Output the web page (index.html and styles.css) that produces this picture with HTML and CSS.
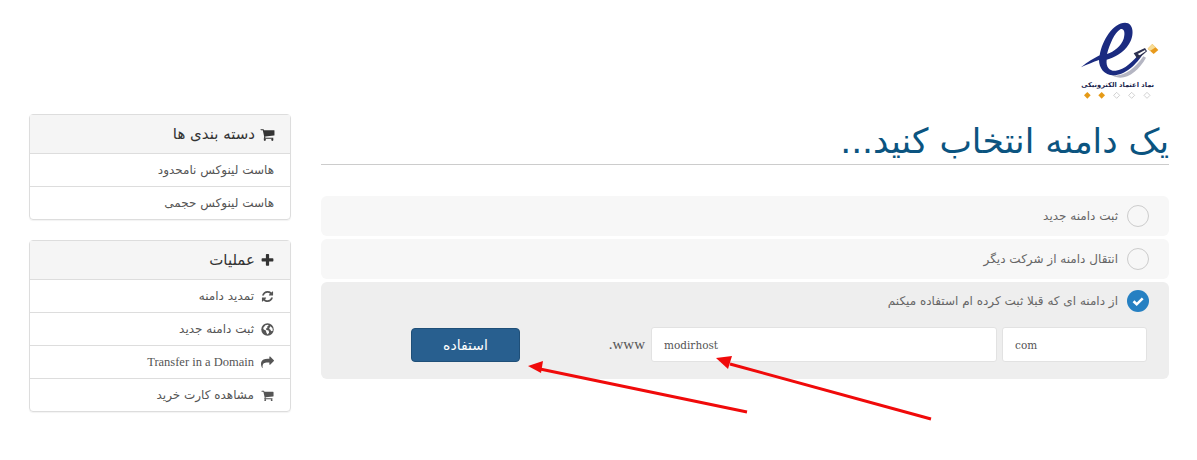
FILE: index.html
```html
<!DOCTYPE html>
<html lang="fa" dir="rtl">
<head>
  <meta charset="UTF-8">
  <title>انتخاب دامنه</title>
  <link rel="stylesheet" href="styles.css">
</head>
<body>

  <header class="top">
    <svg class="logo" viewBox="0 0 270 255" aria-label="نماد اعتماد الکترونیکی">
      <path d="M100 165C130 184 170 165 205 115L213 119C185 168 140 198 100 165Z" fill="#b4b5c2"/>
      <path fill-rule="evenodd" d="M18 148C40 130 55 122 74 112C82 65 115 15 150 14C178 14 178 55 162 78C145 105 120 118 95 125C92 148 105 160 122 158C148 156 175 130 197 102L205 106C185 140 150 172 115 172C88 172 72 150 72 126C55 132 35 140 18 148ZM96 108C118 100 138 85 146 62C152 42 146 30 136 34C118 44 104 80 96 108Z" fill="#1b2b80"/>
      <path d="M176 106L210 90L216 100L188 124Z" fill="#2c3050"/>
      <path d="M188 108L210 96L212 100L194 112Z" fill="#fff"/>
      <path d="M232 78L250 96L236 108L218 92Z" fill="#e89a1c"/>
      <path d="M232 78L242 88L226 98L218 92Z" fill="#f7dc95"/>
      <text class="logo-text" x="128" y="207" text-anchor="middle">نماد اعتماد الکترونیکی</text>
      <g stroke="#b9b9b9" stroke-width="2" fill="#fff">
        <path d="M216 223l9 9-9 9-9-9z"/>
        <path d="M170 223l9 9-9 9-9-9z"/>
        <path d="M125 223l9 9-9 9-9-9z"/>
      </g>
      <g fill="#e59a17">
        <path d="M80 222l10 10-10 10-10-10z"/>
        <path d="M37 222l10 10-10 10-10-10z"/>
      </g>
    </svg>
  </header>

  <div class="layout">
    <main class="main">
      <h1>یک دامنه انتخاب کنید...</h1>

      <div class="option">
        <span class="radio"></span>
        <span class="option-label">ثبت دامنه جدید</span>
      </div>
      <div class="option">
        <span class="radio"></span>
        <span class="option-label">انتقال دامنه از شرکت دیگر</span>
      </div>
      <div class="option option-active">
        <div class="option-head">
          <span class="radio radio-on">
            <svg viewBox="0 0 22 22"><path d="M6.500 11.200l3.200 3.100 6-6" fill="none" stroke="#fff" stroke-width="2.600"/></svg>
          </span>
          <span class="option-label">از دامنه ای که قبلا ثبت کرده ام استفاده میکنم</span>
        </div>
        <div class="domain-row">
          <input class="field field-tld" type="text" value="com" dir="ltr">
          <input class="field field-sld" type="text" value="modirhost" dir="ltr">
          <span class="www">www.</span>
          <button class="btn" type="button">استفاده</button>
        </div>
      </div>
    </main>

    <aside class="side">
      <div class="panel">
        <h3 class="panel-title">
          <svg class="ico ico-lg" viewBox="0 0 1792 1792"><path d="M704 1536q0 52-38 90t-90 38-90-38-38-90 38-90 90-38 90 38 38 90zm896 0q0 52-38 90t-90 38-90-38-38-90 38-90 90-38 90 38 38 90zm128-1088v512q0 24-16.500 42.500t-40.500 21.500l-1044 122q13 60 13 70 0 16-24 64h920q26 0 45 19t19 45-19 45-45 19h-1024q-26 0-45-19t-19-45q0-11 8-31.500t16-36 21.500-40 15.500-29.500l-177-823h-204q-26 0-45-19t-19-45 19-45 45-19h256q16 0 28.500 6.500t19.500 15.500 13 24.500 8 26 5.500 29.500 4.500 26h1201q26 0 45 19t19 45z"/></svg>
          دسته بندی ها
        </h3>
        <a class="panel-row">هاست لینوکس نامحدود</a>
        <a class="panel-row">هاست لینوکس حجمی</a>
      </div>

      <div class="panel">
        <h3 class="panel-title">
          <svg class="ico ico-lg" viewBox="0 0 1792 1792"><path d="M1600 736v192q0 40-28 68t-68 28h-416v416q0 40-28 68t-68 28h-192q-40 0-68-28t-28-68v-416h-416q-40 0-68-28t-28-68v-192q0-40 28-68t68-28h416v-416q0-40 28-68t68-28h192q40 0 68 28t28 68v416h416q40 0 68 28t28 68z"/></svg>
          عملیات
        </h3>
        <a class="panel-row">
          <svg class="ico" viewBox="0 0 1792 1792"><path d="M1639 1056q0 5-1 7-64 268-268 434.500t-478 166.500q-146 0-282.500-55t-243.500-157l-129 129q-19 19-45 19t-45-19-19-45v-448q0-26 19-45t45-19h448q26 0 45 19t19 45-19 45l-137 137q71 66 161 102t187 36q134 0 250-65t186-179q11-17 53-117 8-23 30-23h192q13 0 22.500 9.500t9.500 22.500zm25-800v448q0 26-19 45t-45 19h-448q-26 0-45-19t-19-45 19-45l138-138q-148-137-349-137-134 0-250 65t-186 179q-11 17-53 117-8 23-30 23h-199q-13 0-22.500-9.500t-9.500-22.500v-7q65-268 270-434.500t480-166.500q146 0 284 55.500t245 156.500l130-129q19-19 45-19t45 19 19 45z"/></svg>
          تمدید دامنه
        </a>
        <a class="panel-row">
          <svg class="ico" viewBox="0 0 24 24"><circle cx="12" cy="12" r="11.500"/><path d="M4 9l4-5 5-1 1 2-3 2 1 2-3 1 1 3 4 1 1 4-3 3-2-3-1-4-4-2zM17 6l4 3 1 5-3 1-2-3-2-1z" fill="#fff"/></svg>
          ثبت دامنه جدید
        </a>
        <a class="panel-row panel-row-en">
          <svg class="ico" viewBox="0 0 1792 1792"><path d="M1792 640q0 26-19 45l-512 512q-19 19-45 19t-45-19-19-45v-256h-224q-98 0-175.500 6t-154 21.500-133 42.500-105.500 69.500-80 101-48.500 138.500-17.500 181q0 55 5 123 0 6 2.500 23.500t2.500 26.500q0 15-8.500 25t-23.500 10q-16 0-28-17-7-9-13-22t-13.500-30-10.500-24q-127-285-127-451 0-199 53-333 162-403 875-403h224v-256q0-26 19-45t45-19 45 19l512 512q19 19 19 45z"/></svg>
          Transfer in a Domain
        </a>
        <a class="panel-row">
          <svg class="ico" viewBox="0 0 1792 1792"><path d="M704 1536q0 52-38 90t-90 38-90-38-38-90 38-90 90-38 90 38 38 90zm896 0q0 52-38 90t-90 38-90-38-38-90 38-90 90-38 90 38 38 90zm128-1088v512q0 24-16.500 42.500t-40.500 21.500l-1044 122q13 60 13 70 0 16-24 64h920q26 0 45 19t19 45-19 45-45 19h-1024q-26 0-45-19t-19-45q0-11 8-31.500t16-36 21.500-40 15.500-29.500l-177-823h-204q-26 0-45-19t-19-45 19-45 45-19h256q16 0 28.500 6.500t19.500 15.500 13 24.500 8 26 5.500 29.500 4.500 26h1201q26 0 45 19t19 45z"/></svg>
          مشاهده کارت خرید
        </a>
      </div>
    </aside>
  </div>

  <!-- red arrows drawn on top of the screenshot -->
  <svg class="arrows" viewBox="0 0 1197 460">
    <path d="M747 412L540 369" stroke="#f00a0a" stroke-width="3" fill="none"/>
    <path d="M528 366l15-5-2 12z" fill="#f00a0a"/>
    <path d="M931 419L730 364" stroke="#f00a0a" stroke-width="3" fill="none"/>
    <path d="M716 358l16-2-4 13z" fill="#f00a0a"/>
  </svg>

</body>
</html>
```

FILE: styles.css
```css
body {
  font-family: "DejaVu Sans", sans-serif;
  background: #fff;
  margin: 0;
  padding: 0 28px 0 29px;
  color: #555;
  font-size: 12px;
  height: 460px;
  box-sizing: border-box;
  overflow: hidden;
  position: relative;
}

.top {
  height: 114px;
  padding: 18px 0 0 0;
  margin-right: 4px;
  box-sizing: border-box;
}

.logo {
  display: block;
  width: 90px;
  height: 85px;
}

.logo-text {
  font-size: 20px;
  font-weight: bold;
  fill: #20254d;
}

.layout {
  display: flex;
  gap: 30px;
}

.main {
  width: 848px;
}

h1 {
  margin: 0 0 31px;
  height: 51px;
  box-sizing: border-box;
  padding-top: 8px;
  border-bottom: 1px solid #ccc;
  color: #0b5480;
  font-size: 34.500px;
  font-weight: normal;
  line-height: 38px;
}

.option {
  display: flex;
  align-items: center;
  gap: 9px;
  height: 40px;
  margin-bottom: 3px;
  padding: 0 20px;
  background: #f7f7f7;
  border-radius: 6px;
}

.option-active {
  display: block;
  box-sizing: border-box;
  height: 97px;
  margin: 0;
  padding: 8px 20px 0 21px;
  background: #eee;
}

.option-head {
  display: flex;
  align-items: center;
  gap: 9px;
  height: 22px;
}

.option-label {
  font-size: 12px;
  color: #666;
}

.radio {
  width: 22px;
  height: 22px;
  box-sizing: border-box;
  border: 1px solid #ccc;
  border-radius: 50%;
  background: #f7f7f7;
  flex: none;
}

.radio-on {
  border: 0;
  background: #2680c2;
}

.radio-on svg {
  display: block;
}

.domain-row {
  display: flex;
  align-items: center;
  margin: 15px 2px 0 0;
}

.field {
  height: 35px;
  box-sizing: border-box;
  border: 1px solid #e2e2e2;
  border-radius: 3px;
  background: #fff;
  color: #555;
  padding: 0 12px;
  font-family: "DejaVu Serif", serif;
  font-size: 10.500px;
}

.field-tld {
  width: 145px;
}

.field-sld {
  width: 346px;
  margin-right: 5px;
}

.www {
  width: 41px;
  margin-right: 6px;
  font-family: "Liberation Serif", serif;
  font-size: 15px;
}

.btn {
  width: 109px;
  height: 34px;
  margin-right: 84px;
  border: 1px solid #1f4f78;
  border-radius: 4px;
  background: #285f8f;
  color: #fff;
  font-family: "DejaVu Sans", sans-serif;
  font-size: 14px;
}

.side {
  width: 262px;
}

.panel {
  border: 1px solid #ddd;
  border-radius: 4px;
  margin-bottom: 20px;
  box-shadow: 0 1px 1px rgba(0, 0, 0, 0.05);
}

.panel-title {
  display: flex;
  align-items: center;
  gap: 5px;
  height: 38px;
  margin: 0;
  padding: 0 15px;
  background: #f5f5f5;
  color: #333;
  font-size: 15px;
  font-weight: normal;
}

.panel-row {
  display: flex;
  align-items: center;
  gap: 7px;
  height: 32px;
  padding: 0 16px;
  border-top: 1px solid #ddd;
  color: #555;
  font-size: 12px;
}

.panel-row-en {
  font-family: "Liberation Serif", serif;
  font-size: 12.500px;
}

.ico {
  width: 13px;
  height: 13px;
  fill: #555;
  flex: none;
}

.ico-lg {
  width: 15px;
  height: 15px;
  fill: #333;
}

.arrows {
  position: absolute;
  left: 0;
  top: 0;
  width: 1197px;
  height: 460px;
  pointer-events: none;
}
```
